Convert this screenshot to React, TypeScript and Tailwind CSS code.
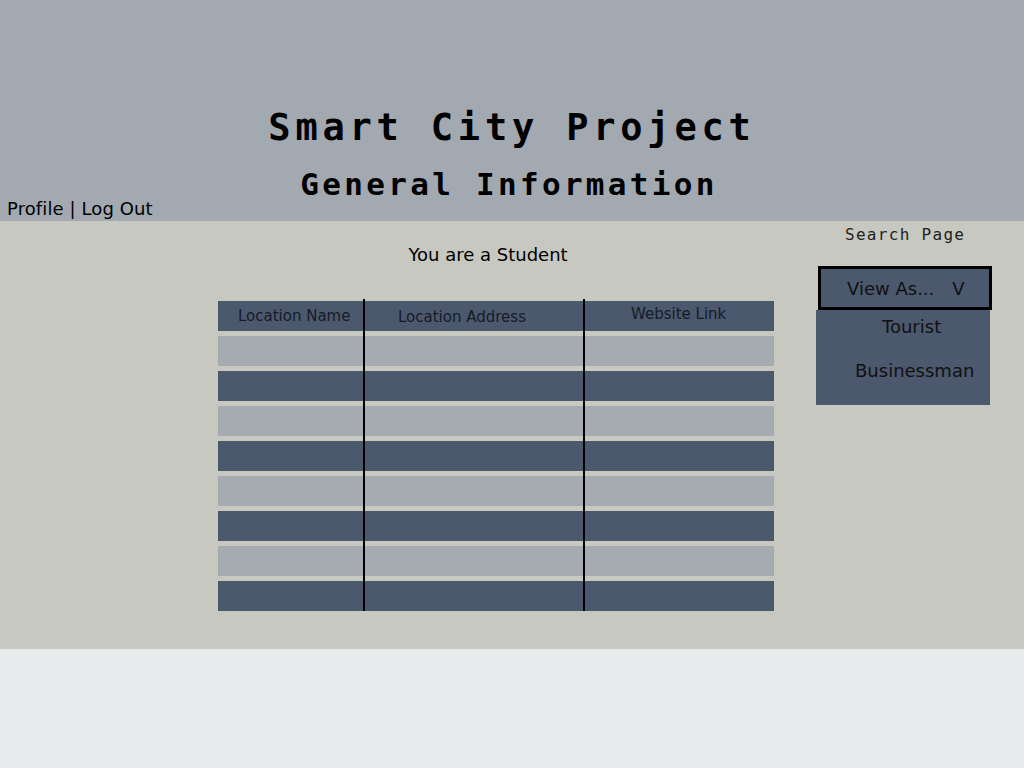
import React from "react";

const columns = [
  { title: "Location Name", width: "w-[147px]", border: true, pad: "pl-[20px] pt-[6px]" },
  { title: "Location Address", width: "w-[220px]", border: true, pad: "pl-[33px] pt-[7px]" },
  { title: "Website Link", width: "w-[189px]", border: false, pad: "pl-[46px] pt-[4px]" },
];

const rowCount = 8;

function TableColumn({ title, width, border, pad }: { title: string; width: string; border: boolean; pad: string }) {
  return (
    <div className={`${width} flex flex-col gap-[5px] pt-[2px] ${border ? "border-r-2 border-black" : ""}`}>
      <div className={`h-[30px] bg-[#4c586d] text-[15px] text-[#151b28] leading-[18px] ${pad}`}>{title}</div>
      {Array.from({ length: rowCount }).map((_, i) => (
        <div key={i} className={`h-[30px] ${i % 2 === 0 ? "bg-[#a5abb0]" : "bg-[#4c586d]"}`} />
      ))}
    </div>
  );
}

export default function App() {
  return (
    <div className="min-h-screen bg-[#e9eaec] font-['DejaVu_Sans',sans-serif]">
      <header className="h-[221px] bg-[#a2a9b0] flex flex-col">
        <h1 className="pt-[106px] text-center text-[37px] leading-[44px] font-bold tracking-[4.8px] text-black font-['DejaVu_Sans_Mono',monospace]">
          Smart City Project
        </h1>
        <h2 className="mt-[16px] text-center text-[31px] leading-[36px] font-bold tracking-[3.3px] text-black font-['DejaVu_Sans_Mono',monospace] pr-[6px]">
          General Information
        </h2>
        <div className="pl-[7px] -mt-[4px] text-[18px] leading-[22px] tracking-[0.1px] text-black">Profile | Log Out</div>
      </header>

      <main className="h-[428px] bg-[#c7c8c0] flex pl-[218px]">
        <section className="w-[556px] flex flex-col">
          <p className="pt-[23px] text-center text-[18px] leading-[22px] text-black pr-[16px]">You are a Student</p>
          <div className="mt-[33px] flex">
            {columns.map((c) => (
              <TableColumn key={c.title} {...c} />
            ))}
          </div>
        </section>

        <aside className="ml-[42px] w-[176px] flex flex-col">
          <div className="pt-[5px] pl-[29px] text-[16px] leading-[18px] tracking-[1.3px] text-[#222] font-['DejaVu_Sans_Mono',monospace] font-light">
            Search Page
          </div>
          <button className="mt-[22px] ml-[2px] w-[174px] h-[44px] border-[3px] border-black bg-[#4c586d] text-left pl-[26px] text-[18px] text-[#111] flex items-center">
            <span>View As...</span>
            <span className="ml-[18px]">V</span>
          </button>
          <ul className="w-[174px] h-[95px] bg-[#4c586d] text-[18px] text-[#111] flex flex-col">
            <li className="pt-[6px] pl-[66px] leading-[22px]">Tourist</li>
            <li className="pt-[22px] pl-[39px] leading-[22px]">Businessman</li>
          </ul>
        </aside>
      </main>
    </div>
  );
}
